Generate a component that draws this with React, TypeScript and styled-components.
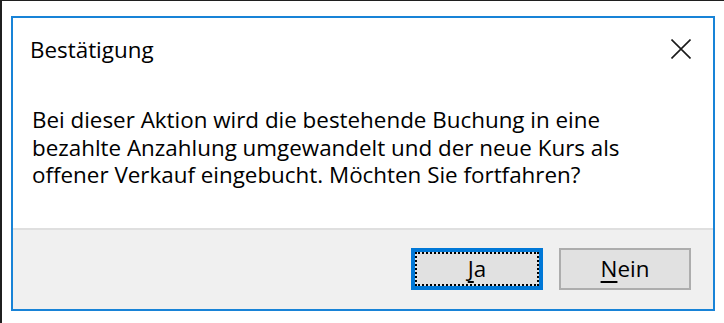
import React from 'react';
import styled, { createGlobalStyle } from 'styled-components';

const GlobalStyle = createGlobalStyle`
  html, body {
    margin: 0;
    padding: 0;
    background: #ffffff;
  }
  body {
    font-family: "Open Sans", "Noto Sans", sans-serif;
  }
`;

const Screen = styled.div`
  width: 724px;
  height: 323px;
  box-sizing: border-box;
  border-top: 1px solid #1f1f1f;
  border-left: 2px solid #1f1f1f;
  padding: 15px 0 0 9px;
  overflow: hidden;
`;

const Dialog = styled.div`
  width: 704px;
  height: 295px;
  box-sizing: border-box;
  border: 2px solid #1883d7;
  background: #ffffff;
  display: flex;
  flex-direction: column;
`;

const Header = styled.div`
  height: 62px;
  display: flex;
  align-items: center;
  justify-content: space-between;
  padding: 0 22px 0 17px;
  box-sizing: border-box;
`;

const Title = styled.div`
  font-size: 22.4px;
  color: #000;
`;

const CloseButton = styled.div`
  width: 20px;
  height: 20px;
  display: flex;
`;

const Body = styled.div`
  flex: 1;
  padding: 26px 20px 0 19px;
  font-size: 22.4px;
  line-height: 27.5px;
  color: #000;
`;

const Footer = styled.div`
  height: 81px;
  box-sizing: border-box;
  background: #f0f0f0;
  border-top: 2px solid #dfdfdf;
  display: flex;
  justify-content: flex-end;
  align-items: flex-start;
  gap: 16px;
  padding: 18px 22px 0 0;
`;

const Button = styled.div<{ $focused?: boolean }>`
  width: 132px;
  height: 42px;
  box-sizing: border-box;
  background: #e1e1e1;
  border: ${(p) => (p.$focused ? '4px solid #0078d7' : '2px solid #adadad')};
  padding: ${(p) => (p.$focused ? '0' : '2px')};
  display: flex;
  font-size: 22.4px;
  color: #000;
`;

const ButtonInner = styled.div<{ $focused?: boolean }>`
  flex: 1;
  box-sizing: border-box;
  border: 2px ${(p) => (p.$focused ? 'dotted #000' : 'solid transparent')};
  display: flex;
  align-items: center;
  justify-content: center;
  line-height: 1;
`;

const Mnemonic = styled.span`
  text-decoration: underline;
  text-decoration-thickness: 2px;
  text-underline-offset: 4px;
`;

export default function App() {
  return (
    <>
      <GlobalStyle />
      <Screen>
        <Dialog>
          <Header>
            <Title>Bestätigung</Title>
            <CloseButton>
              <svg width="20" height="20" viewBox="0 0 20 20">
                <path d="M0.5 0.5 L19.5 19.5 M19.5 0.5 L0.5 19.5" stroke="#1a1a1a" strokeWidth="1.6" fill="none" />
              </svg>
            </CloseButton>
          </Header>
          <Body>
            Bei dieser Aktion wird die bestehende Buchung in eine
            <br />
            bezahlte Anzahlung umgewandelt und der neue Kurs als
            <br />
            offener Verkauf eingebucht. Möchten Sie fortfahren?
          </Body>
          <Footer>
            <Button $focused>
              <ButtonInner $focused>
                <span>
                  <Mnemonic>J</Mnemonic>a
                </span>
              </ButtonInner>
            </Button>
            <Button>
              <ButtonInner>
                <span>
                  <Mnemonic>N</Mnemonic>ein
                </span>
              </ButtonInner>
            </Button>
          </Footer>
        </Dialog>
      </Screen>
    </>
  );
}
